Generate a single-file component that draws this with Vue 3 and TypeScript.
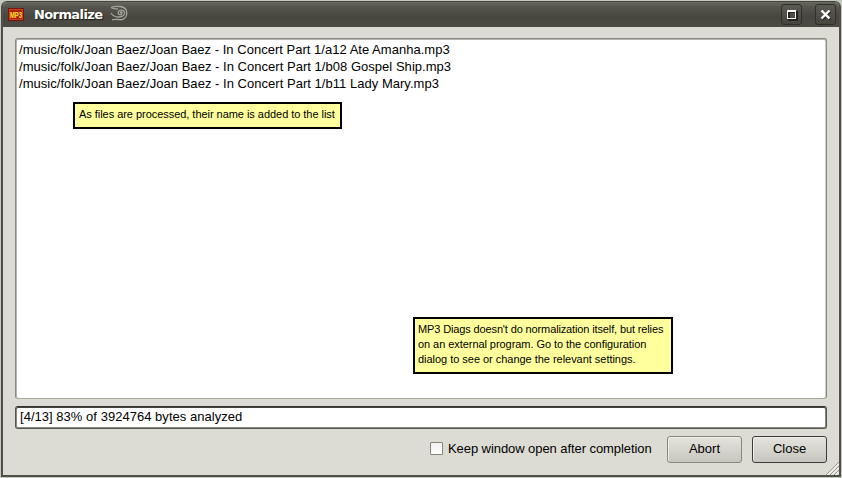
<script setup lang="ts">
import { ref } from 'vue'

interface ProcessedFile {
  name: string
  fit: string
}

const files: ProcessedFile[] = [
  { name: '/music/folk/Joan Baez/Joan Baez - In Concert Part 1/a12 Ate Amanha.mp3', fit: 'fit-a' },
  { name: '/music/folk/Joan Baez/Joan Baez - In Concert Part 1/b08 Gospel Ship.mp3', fit: 'fit-b' },
  { name: '/music/folk/Joan Baez/Joan Baez - In Concert Part 1/b11 Lady Mary.mp3', fit: 'fit-c' },
]
const keepOpen = ref(false)
</script>

<template>
  <div class="window">
    <header class="titlebar">
      <svg class="app-icon" width="16" height="14" viewBox="0 0 16 14">
        <rect x="0.5" y="0.5" width="15" height="12" fill="#b51a10" stroke="#6b1a10" />
        <rect x="1.5" y="1.5" width="13" height="10" fill="none" stroke="#c8401c" />
        <text x="2" y="10" textLength="12" lengthAdjust="spacingAndGlyphs" class="icon-text">MP3</text>
      </svg>
      <h1 class="title">Normalize</h1>
      <svg class="swirl" width="19" height="18" viewBox="0 0 19 18" fill="none" stroke="#a5a59d" stroke-width="1.3">
        <path d="M1 2.5C4 1 7 1.2 10 1.5C14.5 2 17 4.5 16.8 8.5C16.7 12.5 13.5 15 10 14.7C7 14.5 4.5 13.8 2 14.8" />
        <path d="M1 2.5C3 4 5 4 8 3.8" />
        <path d="M1 8C3 11 6 12.2 9 12C13 12 15 9.8 14.5 7.3C13.8 4.5 9.5 4.3 8.3 6.8C7.5 9.3 10.3 10.8 12 9" />
        <circle cx="11.3" cy="7.6" r="0.8" />
      </svg>
      <div class="controls">
        <button class="ctl" aria-label="Maximize">
          <svg width="21" height="21" viewBox="0 0 21 21"><path d="M8 8h8v8h-8z" fill="none" stroke="#25251f" stroke-width="2" /><path d="M6 6h9v9H6zM7 8v6h7V8z" fill="#fff" fill-rule="evenodd" /></svg>
        </button>
        <button class="ctl" aria-label="Close window">
          <svg width="21" height="21" viewBox="0 0 21 21" fill="none" stroke-width="2.4"><path d="M7.5 7.5l8 8M15.5 7.5l-8 8" stroke="#25251f" /><path d="M6.5 6.5l8 8M14.5 6.5l-8 8" stroke="#fff" /></svg>
        </button>
      </div>
    </header>
    <main class="body">
      <section class="list">
        <div v-for="file in files" :key="file.name" class="file"><span :class="file.fit">{{ file.name }}</span></div>
        <aside class="note note-list"><span>As files are processed, their name is added to the list</span></aside>
        <aside class="note note-info">
          <div class="n1">MP3 Diags doesn't do normalization itself, but relies</div>
          <div class="n2">on an external program. Go to the configuration</div>
          <div class="n3">dialog to see or change the relevant settings.</div>
        </aside>
      </section>
      <div class="status"><span>[4/13] 83% of 3924764 bytes analyzed</span></div>
      <footer class="actions">
        <label class="keep"><input v-model="keepOpen" type="checkbox" /><span>Keep window open after completion</span></label>
        <button class="btn abort">Abort</button>
        <button class="btn close">Close</button>
      </footer>
    </main>
    <svg class="grip" width="13" height="13" viewBox="0 0 13 13">
      <path d="M0 13L13 0M4 13L13 4M8 13L13 8" stroke="#96968e" />
      <path d="M1.5 13L13 1.5M5.5 13L13 5.5M9.5 13L13 9.5" stroke="#fff" />
    </svg>
  </div>
</template>

<style>
body { background: #c3c9bd; overflow: hidden; }
</style>

<style scoped>
* { box-sizing: border-box; }
.window {
  position: relative;
  display: flex;
  flex-direction: column;
  width: 840px;
  height: 476px;
  margin: 1px 0 0 1px;
  border: 2px solid #50504a;
  border-top: 1px solid #45453e;
  border-radius: 6px 6px 0 0;
  background: #dddcd4;
  overflow: hidden;
  color: #000;
  font: 13px/17px "Liberation Sans", Arial, sans-serif;
}
.titlebar {
  display: flex;
  align-items: center;
  flex: none;
  height: 25px;
  padding: 0 3px 0 5px;
  background: linear-gradient(#686860 0, #55554d 20%, #47473f 60%, #4b4b43);
}
.app-icon { overflow: visible; }
.icon-text { font: bold 9px "Liberation Sans", sans-serif; fill: #ffe92e; }
.title {
  width: 69px;
  margin: 0 0 0 10px;
  color: #fff;
  font: bold 13px/18px "DejaVu Sans", sans-serif;
  letter-spacing: -0.6px;
  white-space: nowrap;
  text-shadow: 1px 1px 1px #1b1b17;
}
.swirl { margin: 0 0 1px 7px; }
.controls { display: flex; gap: 13px; margin: 0 0 0 auto; }
.ctl {
  width: 21px;
  height: 21px;
  padding: 0;
  border: 1px solid #30302a;
  border-radius: 3px;
  background: linear-gradient(#5b5b53, #45453d);
}
.ctl svg { display: block; margin: -1px; }
.body { display: flex; flex: 1; flex-direction: column; padding: 11px 12px 12px; }
.list {
  position: relative;
  height: 361px;
  padding: 2px 3px;
  border: 1px solid #8a8a83;
  border-bottom-color: #a8a8a1;
  border-radius: 3px;
  background: #fff;
  box-shadow: inset 0 1px #b5b5af, inset 1px 0 #b5b5af, inset -1px 0 #cdcdc8;
}
.file { height: 17px; white-space: nowrap; }
.fit-a { letter-spacing: 0.02px; }
.fit-b { letter-spacing: 0.03px; }
.fit-c { letter-spacing: 0.03px; }
.note {
  position: absolute;
  border: 2px solid #000;
  background: #ffff9e;
  font-size: 11px;
  line-height: 15px;
  white-space: nowrap;
}
.note-list { left: 57px; top: 63px; width: 269px; height: 27px; padding: 3px 4px; letter-spacing: -0.04px; }
.note-info { left: 397px; top: 278px; width: 260px; height: 57px; padding: 3px; }
.n1 { letter-spacing: -0.13px; }
.n2 { letter-spacing: -0.06px; }
.n3 { letter-spacing: -0.03px; }
.status {
  height: 23px;
  margin-top: 7px;
  padding: 1px 4px;
  border: 1px solid #55554f;
  border-top-color: #33332f;
  border-radius: 3px;
  background: #fff;
  box-shadow: inset 0 1px #44443f, inset 1px 0 #888882, inset -1px 0 #888882, inset 0 -1px #8d8d87;
  letter-spacing: 0.03px;
  white-space: nowrap;
}
.actions { display: flex; justify-content: flex-end; align-items: center; height: 27px; margin-top: 7px; }
.keep { display: flex; align-items: center; gap: 5px; width: 237px; margin-top: -2px; letter-spacing: -0.07px; white-space: nowrap; }
.keep input {
  appearance: none;
  width: 13px;
  height: 13px;
  margin: 0;
  border: 1px solid #85857e;
  border-radius: 1px;
  background: linear-gradient(#f1f1f1, #fff);
}
.btn {
  width: 75px;
  height: 27px;
  padding: 0 0 2px;
  border: 1px solid #88887f;
  border-radius: 3px;
  background: linear-gradient(#e4e3dc, #c7c6be);
  box-shadow: inset 1px 1px #eeede8;
  color: #000;
  font: inherit;
}
.close { margin-left: 10px; border-color: #3d3d37; }
.grip { position: absolute; right: 0; bottom: 0; }
</style>
